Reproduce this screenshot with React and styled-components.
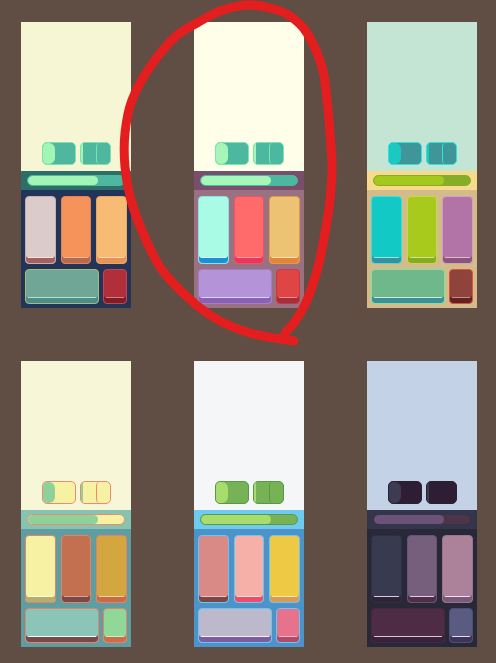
import React from 'react'
import styled, { createGlobalStyle } from "styled-components";

const GlobalStyle = createGlobalStyle`
  html, body {
    margin: 0;
    padding: 0;
    background: #604e44;
    font-family: "Liberation Sans", Arial, sans-serif;
  }
`;

// palettes, one per preview card
const palettes = [
    {
        top: '#f7f6d4', tgEdge: '#7ae3b0', knob: '#a3f5b6', track: '#4fb7a0',
        barBg: '#2e6e69', barEdge: '#4fb7a0', fill: '#a3f5b6', barTrack: '#4fb7a0', base: '#223457',
        tiles: [
            ['#dccbcb', '#c8b0b0', '#a5615f', '#f2e2e2'],
            ['#f6935a', '#e88050', '#b56a52', '#fbb58a'],
            ['#f8bb74', '#eca862', '#e6935a', '#fdd8ae'],
            ['#6fa696', '#a8ba7c', '#4c8c8a', '#b6e0d4'],
            ['#b12e3b', '#c54450', '#7a1e2a', '#d77a82'],
        ],
    },
    {
        top: '#fefee9', tgEdge: '#7ae8b2', knob: '#a6f6b8', track: '#4db8a0',
        barBg: '#7a4d6d', barEdge: '#4db8a0', fill: '#a6f6b8', barTrack: '#4db8a0', base: '#9a7180',
        tiles: [
            ['#a9fbe5', '#8ee0e8', '#1d8fd8', '#d8fff5'],
            ['#ff6a6b', '#e85468', '#ea3560', '#ffa0a0'],
            ['#ebc373', '#e09a4e', '#e2853a', '#f8e2b0'],
            ['#b593d9', '#a07fc8', '#8b62b2', '#e2cff5'],
            ['#e04545', '#c83840', '#a52e3c', '#f08a8a'],
        ],
    },
    {
        top: '#c4e5d4', tgEdge: '#2ce4df', knob: '#1cc8c2', track: '#3f9598',
        barBg: '#f8da8c', barEdge: '#86ad28', fill: '#a4c91c', barTrack: '#86ad28', base: '#d4bc8a',
        tiles: [
            ['#12c9c5', '#48dcd8', '#3a8f9a', '#8ee8e6'],
            ['#a7ca1d', '#c0da50', '#86aa28', '#d0e878'],
            ['#b273a7', '#d39fc6', '#8a5676', '#e0b8d8'],
            ['#6fb88b', '#80e2a2', '#3f8e98', '#c8ecd8'],
            ['#8f433a', '#e0503f', '#5c2424', '#d08a80'],
        ],
    },
    {
        top: '#f7f7d7', tgEdge: '#ec8a74', knob: '#8fd19a', track: '#f7f2a2',
        barBg: '#86c3b3', barEdge: '#ec8a74', fill: '#8fd19a', barTrack: '#f7f2a2', base: '#5e9ea1',
        tiles: [
            ['#f7f2a3', '#e8806c', '#b2b06c', '#fffbe0'],
            ['#c37050', '#e8806c', '#7a4848', '#e0a090'],
            ['#d3a640', '#e8806c', '#cb6847', '#f2d8a0'],
            ['#8bc5b7', '#e8806c', '#7a4848', '#e8fff8'],
            ['#90d898', '#e8806c', '#d06c45', '#c8f0c8'],
        ],
    },
    {
        top: '#f4f6f7', tgEdge: '#5a9848', knob: '#a8dc6c', track: '#78b256',
        barBg: '#6ccbef', barEdge: '#5a9848', fill: '#a8dc6c', barTrack: '#78b256', base: '#4b93c8',
        tiles: [
            ['#d98a87', '#6ec4ec', '#784848', '#f0c0c0'],
            ['#f7b0a8', '#6ec4ec', '#f04a6c', '#ffe0dc'],
            ['#eec943', '#6ec4ec', '#d89a5a', '#fae89a'],
            ['#bdb9cd', '#6ec4ec', '#7c5ca2', '#f4f2fa'],
            ['#e6738b', '#6ec4ec', '#b24a6a', '#f6b8c4'],
        ],
    },
    {
        top: '#c3d2e7', tgEdge: '#2a2034', knob: '#3c3b52', track: '#2e1d33',
        barBg: '#34344a', barEdge: '#34344a', fill: '#6c5278', barTrack: '#4e3447', base: '#282839',
        tiles: [
            ['#383a4f', '#2e2e44', '#2f2538', '#d8d0dc'],
            ['#765e7d', '#6c5272', '#4e2e48', '#e0d0e0'],
            ['#ab8299', '#9a748c', '#7b5a79', '#f0e4f0'],
            ['#4f2c46', '#44283e', '#3a2238', '#d8c8d4'],
            ['#5a5b80', '#4e4e72', '#3e3458', '#e0e0f0'],
        ],
    },
];

const Page = styled.div`
    position: relative;
    width: 496px;
    height: 663px;
    box-sizing: border-box;
    padding: 22px 0 0 21px;
    overflow: hidden;
`;

const Grid = styled.div`
    display: grid;
    grid-template-columns: repeat(3, 110px);
    grid-auto-rows: 286px;
    column-gap: 63px;
    row-gap: 53px;
`;

const Card = styled.div`
    display: flex;
    flex-direction: column;
    background: ${p => p.$base};
`;

const Sky = styled.div`
    height: 149px;
    background: ${p => p.$bg};
    display: flex;
    align-items: flex-end;
    justify-content: center;
    gap: 4px;
    padding-bottom: 6px;
    box-sizing: border-box;
`;

const Toggle = styled.div`
    position: relative;
    display: flex;
    width: ${p => p.$w}px;
    height: 23px;
    box-sizing: border-box;
    border: 1px solid ${p => p.$edge};
    border-radius: 5px;
    background: ${p => p.$track};
    overflow: hidden;
`;

const Knob = styled.div`
    width: 12px;
    height: 100%;
    background: ${p => p.$color};
    border-radius: 4px 6px 6px 4px;
`;

const Strip = styled.div`
    width: 2px;
    height: 100%;
    background: ${p => p.$color};
`;

const Split = styled.div`
    margin-left: auto;
    width: 14px;
    height: 100%;
    box-sizing: border-box;
    border-left: 1px solid ${p => p.$edge};
    border-radius: 4px 0 0 4px;
`;

const BarRow = styled.div`
    height: 19px;
    background: ${p => p.$bg};
    display: flex;
    align-items: center;
    padding: 0 6px;
`;

const Bar = styled.div`
    flex: 1;
    height: 11px;
    box-sizing: border-box;
    border: 1px solid ${p => p.$edge};
    border-radius: 6px;
    background: ${p => p.$track};
    overflow: hidden;
`;

const BarFill = styled.div`
    width: 73%;
    height: 100%;
    background: ${p => p.$color};
    border-radius: 6px;
`;

const Board = styled.div`
    flex: 1;
    display: flex;
    flex-direction: column;
    gap: 5px;
    padding: 6px 4px 4px;
`;

const TileRow = styled.div`
    display: grid;
    grid-template-columns: ${p => p.$cols};
    gap: ${p => p.$gap}px;
    height: ${p => p.$h}px;
`;

const Tile = styled.div`
    position: relative;
    box-sizing: border-box;
    border-radius: 4px;
    background: ${p => p.$fill};
    border: 1px solid ${p => p.$edge};
    box-shadow: inset 0 -5px 0 ${p => p.$lip};
    &::after {
        content: '';
        position: absolute;
        left: 2px;
        right: 2px;
        bottom: 5px;
        height: 1px;
        border-radius: 1px;
        background: ${p => p.$shine};
    }
`;

const Scribble = styled.svg`
    position: absolute;
    left: 0;
    top: 0;
    pointer-events: none;
`;

function PaletteCard({ p }) {
    const t = p.tiles.map(([fill, edge, lip, shine], i) => (
        <Tile key={i} $fill={fill} $edge={edge} $lip={lip} $shine={shine} />
    ));
    return (
        <Card $base={p.base}>
            <Sky $bg={p.top}>
                <Toggle $w={34} $edge={p.tgEdge} $track={p.track}>
                    <Knob $color={p.knob} />
                </Toggle>
                <Toggle $w={31} $edge={p.tgEdge} $track={p.track}>
                    <Strip $color={p.knob} />
                    <Split $edge={p.tgEdge} />
                </Toggle>
            </Sky>
            <BarRow $bg={p.barBg}>
                <Bar $edge={p.barEdge} $track={p.barTrack}>
                    <BarFill $color={p.fill} />
                </Bar>
            </BarRow>
            <Board>
                <TileRow $cols="1fr 1fr 1fr" $gap={5} $h={68}>{t.slice(0, 3)}</TileRow>
                <TileRow $cols="1fr 24px" $gap={4} $h={35}>{t.slice(3)}</TileRow>
            </Board>
        </Card>
    );
}

// hand drawn ring around the second card
const ring = [
    [285, 333], [296, 320], [307, 300], [318, 267], [325, 233], [330, 200], [332, 167],
    [330, 133], [327, 100], [322, 67], [307, 33], [290, 16], [270, 8], [247, 5],
    [220, 11], [197, 23], [175, 37], [150, 67], [132, 100], [125, 133], [125, 167],
    [131, 200], [143, 233], [160, 267], [183, 293], [213, 317], [250, 333], [294, 341],
];

function smooth(pts) {
    let d = `M${pts[0][0]},${pts[0][1]}`;
    for (let i = 0; i < pts.length - 1; i++) {
        const p0 = pts[i - 1] || pts[i];
        const p1 = pts[i];
        const p2 = pts[i + 1];
        const p3 = pts[i + 2] || p2;
        const c1 = [p1[0] + (p2[0] - p0[0]) / 6, p1[1] + (p2[1] - p0[1]) / 6];
        const c2 = [p2[0] - (p3[0] - p1[0]) / 6, p2[1] - (p3[1] - p1[1]) / 6];
        d += ` C${c1[0].toFixed(1)},${c1[1].toFixed(1)} ${c2[0].toFixed(1)},${c2[1].toFixed(1)} ${p2[0]},${p2[1]}`;
    }
    return d;
}

export default function App() {
    return (
        <Page>
            <GlobalStyle />
            <Grid>
                {palettes.map((p, i) => <PaletteCard key={i} p={p} />)}
            </Grid>
            <Scribble width="496" height="663" viewBox="0 0 496 663">
                <path d={smooth(ring)} fill="none" stroke="#e41e1e" strokeWidth="9" strokeLinecap="round" strokeLinejoin="round" />
            </Scribble>
        </Page>
    );
}
